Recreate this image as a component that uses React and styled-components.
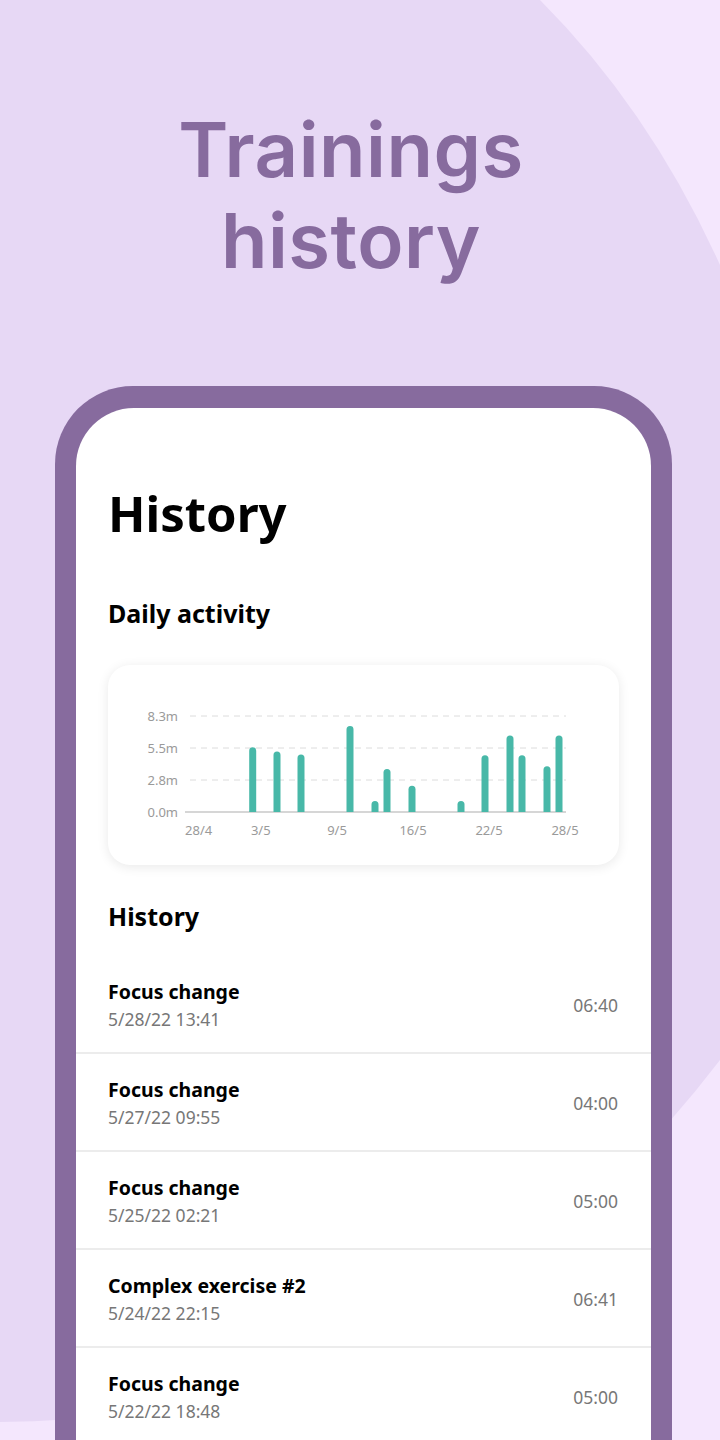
import React from "react";
import styled, { createGlobalStyle } from "styled-components";

const GlobalStyle = createGlobalStyle`
  html, body {
    margin: 0;
    padding: 0;
  }
  body {
    font-family: "Noto Sans", "Open Sans", sans-serif;
    color: #000;
  }
`;

const bars = [
  { x: 144.7, h: 64.8 },
  { x: 169, h: 60.4 },
  { x: 193, h: 57.4 },
  { x: 242, h: 86 },
  { x: 267, h: 11 },
  { x: 279, h: 43 },
  { x: 304, h: 26.2 },
  { x: 353, h: 11 },
  { x: 377, h: 56.7 },
  { x: 402, h: 76.6 },
  { x: 414, h: 56.7 },
  { x: 439, h: 45.7 },
  { x: 451, h: 76.6 },
];

const yTicks = [
  { label: "8.3m", y: 51 },
  { label: "5.5m", y: 83 },
  { label: "2.8m", y: 115 },
  { label: "0.0m", y: 147 },
];

const xTicks = [
  { label: "28/4", x: 90.6 },
  { label: "3/5", x: 152.8 },
  { label: "9/5", x: 229 },
  { label: "16/5", x: 305 },
  { label: "22/5", x: 381 },
  { label: "28/5", x: 457 },
];

const history = [
  { title: "Focus change", date: "5/28/22 13:41", time: "06:40" },
  { title: "Focus change", date: "5/27/22 09:55", time: "04:00" },
  { title: "Focus change", date: "5/25/22 02:21", time: "05:00" },
  { title: "Complex exercise #2", date: "5/24/22 22:15", time: "06:41" },
  { title: "Focus change", date: "5/22/22 18:48", time: "05:00" },
];

const BASE = 147;

function barPath(x, h) {
  const r = 3.5;
  const top = BASE - h;
  return `M${x - r},${BASE} V${top + r} A${r},${r} 0 0 1 ${x + r},${top + r} V${BASE} Z`;
}

function ActivityChart() {
  return (
    <svg width="510" height="200" viewBox="0 0 510 200">
      {yTicks.slice(0, 3).map((t) => (
        <line key={t.label} x1="82" x2="458" y1={t.y} y2={t.y} stroke="#dcdcdc" strokeWidth="1" strokeDasharray="6 5" />
      ))}
      <line x1="77" x2="458" y1={BASE} y2={BASE} stroke="#c8c8c8" strokeWidth="1.5" />
      {yTicks.map((t) => (
        <text key={t.label} x="70" y={t.y + 4.5} textAnchor="end" fontSize="13" fill="#9a9a9a" fontFamily="Noto Sans, sans-serif">
          {t.label}
        </text>
      ))}
      {xTicks.map((t) => (
        <text key={t.label} x={t.x} y="170" textAnchor="middle" fontSize="13" fill="#9a9a9a" fontFamily="Noto Sans, sans-serif">
          {t.label}
        </text>
      ))}
      {bars.map((b, i) => (
        <path key={i} d={barPath(b.x, b.h)} fill="#48b8a8" />
      ))}
    </svg>
  );
}

function Backdrop() {
  return (
    <BackdropSvg width="720" height="1440" viewBox="0 0 720 1440">
      <path d="M0,0 H540 Q650,110 720,265 V1060 Q445,1420 0,1422 Z" fill="#e7d8f5" />
    </BackdropSvg>
  );
}

export default function App() {
  return (
    <Page>
      <GlobalStyle />
      <Backdrop />
      <Content>
        <Headline>
          Trainings
          <br />
          history
        </Headline>
        <PhoneFrame>
          <Screen>
            <ScreenTitle>History</ScreenTitle>
            <SectionTitle>Daily activity</SectionTitle>
            <ChartCard>
              <ActivityChart />
            </ChartCard>
            <SectionTitle $tight>History</SectionTitle>
            <List>
              {history.map((item, i) => (
                <Row key={i}>
                  <RowText>
                    <RowTitle>{item.title}</RowTitle>
                    <RowDate>{item.date}</RowDate>
                  </RowText>
                  <RowTime>{item.time}</RowTime>
                </Row>
              ))}
            </List>
          </Screen>
        </PhoneFrame>
      </Content>
    </Page>
  );
}

const Page = styled.div`
  position: relative;
  width: 720px;
  height: 1440px;
  overflow: hidden;
  background: #f4e7fd;
`;

const BackdropSvg = styled.svg`
  position: absolute;
  left: 0;
  top: 0;
  display: block;
`;

const Content = styled.div`
  position: relative;
  display: flex;
  flex-direction: column;
  height: 100%;
`;

const Headline = styled.h1`
  margin: 0;
  padding: 104px 18px 0 0;
  text-align: center;
  font-family: "Inter", "Lato", sans-serif;
  font-weight: 600;
  font-size: 76px;
  line-height: 91px;
  letter-spacing: 0.5px;
  color: #876b9e;
`;

const PhoneFrame = styled.div`
  flex: 1;
  margin: 100px 0 0 55px;
  width: 617px;
  box-sizing: border-box;
  padding: 22px 21px 0;
  background: #876b9e;
  border-radius: 78px 78px 0 0;
  display: flex;
`;

const Screen = styled.div`
  flex: 1;
  background: #fff;
  border-radius: 58px 58px 0 0;
  padding-top: 74px;
  overflow: hidden;
`;

const ScreenTitle = styled.h2`
  margin: 0 0 54px;
  padding: 0 32px;
  font-size: 49px;
  line-height: 62px;
  font-weight: 700;
`;

const SectionTitle = styled.h3`
  margin: 0 0 ${(p) => (p.$tight ? "25px" : "37px")};
  padding: 0 32px;
  font-size: 25px;
  line-height: 30px;
  font-weight: 700;
`;

const ChartCard = styled.div`
  margin: 0 32px 36px;
  height: 200px;
  background: #fff;
  border-radius: 22px;
  box-shadow: 0 2px 12px rgba(0, 0, 0, 0.09);
  svg {
    display: block;
  }
`;

const List = styled.div`
  display: flex;
  flex-direction: column;
`;

const Row = styled.div`
  display: flex;
  align-items: center;
  justify-content: space-between;
  height: 98px;
  box-sizing: border-box;
  padding: 2px 33px 0 32px;
  border-bottom: 2px solid #ececec;
`;

const RowText = styled.div`
  display: flex;
  flex-direction: column;
  gap: 1px;
`;

const RowTitle = styled.div`
  font-size: 19.5px;
  line-height: 26px;
  font-weight: 700;
  color: #000;
`;

const RowDate = styled.div`
  font-size: 17.5px;
  line-height: 26px;
  color: #777;
`;

const RowTime = styled.div`
  font-size: 17.5px;
  color: #777;
`;
